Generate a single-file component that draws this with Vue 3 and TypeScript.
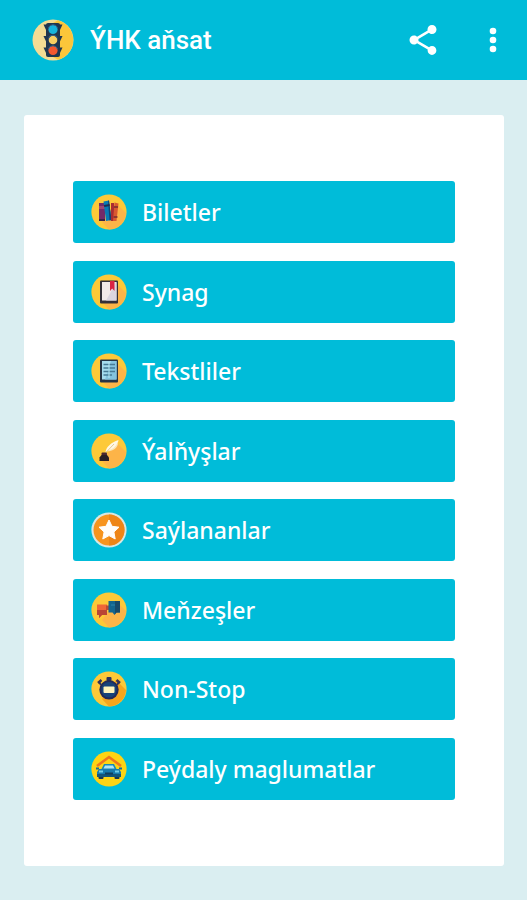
<script setup lang="ts">
type IconName = 'books' | 'notebook' | 'text' | 'quill' | 'star' | 'chat' | 'timer' | 'car'

interface MenuItem {
  icon: IconName
  label: string
}

const items: MenuItem[] = [
  { icon: 'books', label: 'Biletler' },
  { icon: 'notebook', label: 'Synag' },
  { icon: 'text', label: 'Tekstliler' },
  { icon: 'quill', label: 'Ýalňyşlar' },
  { icon: 'star', label: 'Saýlananlar' },
  { icon: 'chat', label: 'Meňzeşler' },
  { icon: 'timer', label: 'Non-Stop' },
  { icon: 'car', label: 'Peýdaly maglumatlar' },
]
</script>

<template>
  <div class="screen">
    <header class="bar">
      <svg class="logo" viewBox="0 0 42 42" aria-hidden="true">
        <circle cx="21" cy="21" r="20.5" fill="#f3dc94" />
        <path d="M26 1.200A20.500 20.500 0 0 1 26 40.800L21 38V4Z" fill="#fbc63a" />
        <g fill="#20364f">
          <path d="M11.500 5.500H30.500L27.500 12H14.500Z" />
          <path d="M11.500 17H30.500L27.500 23.500H14.500Z" />
          <path d="M11.500 28.500H30.500L27.500 35H14.500Z" />
          <rect x="14" y="4" width="14" height="34" rx="2" />
        </g>
        <circle cx="21" cy="10.500" r="4.600" fill="#16b4dc" />
        <circle cx="21" cy="21" r="4.300" fill="#f8cf62" />
        <circle cx="21" cy="31.500" r="4.600" fill="#f4582f" />
        <g fill="none" stroke="#35648a" stroke-width="1">
          <path d="M16.500 9a4.700 4.700 0 0 1 9 0M16.500 19.500a4.700 4.700 0 0 1 9 0M16.500 30a4.700 4.700 0 0 1 9 0" />
        </g>
      </svg>
      <h1 class="title">ÝHK aňsat</h1>
      <button class="action" type="button" aria-label="Paýlaş">
        <svg viewBox="0 0 24 24" aria-hidden="true">
          <path
            fill="#fff"
            d="M18 16.080c-.76 0-1.440.3-1.960.77L8.910 12.700c.05-.23.09-.46.09-.7s-.04-.47-.09-.7l7.050-4.110c.54.5 1.250.81 2.040.81 1.660 0 3-1.340 3-3s-1.340-3-3-3-3 1.340-3 3c0 .24.040.47.090.7L8.040 9.810C7.500 9.310 6.790 9 6 9c-1.660 0-3 1.340-3 3s1.340 3 3 3c.79 0 1.500-.31 2.040-.81l7.120 4.160c-.05.21-.08.43-.08.65 0 1.610 1.310 2.920 2.920 2.920s2.920-1.310 2.920-2.920-1.310-2.920-2.920-2.920z"
          />
        </svg>
      </button>
      <button class="action" type="button" aria-label="Menýu">
        <svg viewBox="0 0 24 24" aria-hidden="true">
          <g fill="#fff">
            <circle cx="12" cy="6" r="2.200" />
            <circle cx="12" cy="12" r="2.200" />
            <circle cx="12" cy="18" r="2.200" />
          </g>
        </svg>
      </button>
    </header>

    <main class="content">
      <nav class="panel">
        <button v-for="item in items" :key="item.icon" class="entry" type="button">
          <svg class="icon" viewBox="0 0 36 36" aria-hidden="true">
            <template v-if="item.icon !== 'star'">
              <circle cx="18" cy="18" r="17.600" :fill="item.icon === 'car' ? '#fdd414' : '#fdc938'" />
              <path
                v-if="item.icon !== 'car'"
                d="M25 9L35 19A17.600 17.600 0 0 1 18 35.600L11 28Z"
                :fill="item.icon === 'timer' ? '#f8a51c' : '#fdb448'"
              />
            </template>

            <template v-if="item.icon === 'books'">
              <rect x="8" y="9" width="6" height="18" fill="#742b68" />
              <path d="M8 12h6v3H8z" fill="#a34670" />
              <path d="M8 25h6v2H8z" fill="#392247" />
              <path d="M12.500 7.500L18 6.500L20.500 26L15 27Z" fill="#087bb4" />
              <path d="M17 6.700L18 6.500L20.500 26L18.500 26.500Z" fill="#144473" />
              <path d="M13 11L18.500 10L18.800 12L13.300 13Z" fill="#1c2c50" />
              <path d="M20 9H23V27H20Z" fill="#a92c32" />
              <path d="M23.500 8.500L27.500 9.500L25.500 27H22Z" fill="#d85830" />
              <path d="M23 13h4M22.500 23h4" stroke="#752b30" stroke-width="1.500" />
            </template>

            <template v-else-if="item.icon === 'notebook'">
              <rect x="9" y="6.500" width="18" height="23" rx="1" fill="#343039" />
              <rect x="11" y="8" width="14.500" height="18.500" fill="#f2e9e9" />
              <path d="M25.500 8V26.500H15Z" fill="#dcd5df" />
              <path d="M19 7H23.500V17L21.200 14.500L19 17Z" fill="#da2442" />
            </template>

            <template v-else-if="item.icon === 'text'">
              <rect x="9" y="6.500" width="18" height="23" rx="1" fill="#263444" />
              <rect x="11" y="8" width="14.500" height="18.500" fill="#a5dcef" />
              <path d="M20 8H25.500V26.500H14Z" fill="#84c4df" />
              <path d="M12.500 11.500H24M12.500 15H24M12.500 18.500H24M12.500 22H21" stroke="#477b96" stroke-width="1.300" />
              <path d="M18 9V25" stroke="#b6e8f4" stroke-width="1" />
            </template>

            <template v-else-if="item.icon === 'quill'">
              <path d="M14 20L27 10C27 15 22 18 15.500 18.500Z" fill="#fbe5b3" />
              <path d="M14.500 19.500C15 14 20 9.500 27.500 7C27 12 22 16.500 16 18Z" fill="#fff8e4" />
              <path d="M13 21.500L23 11" stroke="#e6c992" stroke-width="1" />
              <rect x="10.500" y="19.500" width="5.500" height="3" rx="1" fill="#4b2830" />
              <path d="M10.500 22H16L18 24.500V28H8.500V24.500Z" fill="#292026" />
            </template>

            <template v-else-if="item.icon === 'star'">
              <circle cx="18" cy="18" r="17.600" fill="#d8e7e2" />
              <circle cx="18" cy="18" r="15.500" fill="#f7941e" />
              <path d="M18 2.500A15.500 15.500 0 0 1 18 33.500Z" fill="#ee8517" />
              <path
                d="M18 8L21 14.300L28 15.200L22.900 20L24.200 27L18 23.600L11.800 27L13.100 20L8 15.200L15 14.300Z"
                fill="#fffdfb"
                stroke="#fffdfb"
                stroke-linejoin="round"
              />
            </template>

            <template v-else-if="item.icon === 'chat'">
              <path d="M6 12.500H16V23H11L8 26V23H6Z" fill="#ef6637" />
              <path d="M6 18H16V23H11L8 26V23H6Z" fill="#b94635" />
              <path d="M15 13.500H18V18H15Z" fill="#bd4932" />
              <path d="M17.500 9H29V20.500H25.500L23.500 23L21.500 20.500H17.500Z" fill="#14658e" />
              <path d="M24 9H29V20.500H25.500L24 22Z" fill="#194968" />
              <path d="M20 13H24" stroke="#2c85a9" stroke-width="1" />
            </template>

            <template v-else-if="item.icon === 'timer'">
              <path d="M7 12L10.500 9M29 12L25.500 9" stroke="#353155" stroke-width="2.500" />
              <path d="M10 14L8.500 11.500M26 14L27.500 11.500M18 9V7" stroke="#353155" stroke-width="2" />
              <rect x="15.500" y="6" width="5" height="4" rx="1" fill="#2d315c" />
              <circle cx="18" cy="18.800" r="9.700" fill="#242956" />
              <circle cx="18" cy="18.800" r="7.700" fill="#174279" />
              <rect x="12.500" y="15.500" width="11" height="6.500" rx="1" fill="#fff3bc" />
            </template>

            <template v-else>
              <path d="M6 15L18 6L30 15" fill="none" stroke="#ee751e" stroke-width="2.600" />
              <path d="M10.500 18L13 13H23L25.500 18Z" fill="#1888b7" />
              <path d="M12.500 17.500L14 14.500H22L23.500 17.500Z" fill="#b1e4f1" />
              <rect x="7.500" y="24" width="5" height="4" rx="1" fill="#173853" />
              <rect x="23.500" y="24" width="5" height="4" rx="1" fill="#173853" />
              <path d="M8 18H28L30 21V26H6V21Z" fill="#177bae" />
              <path d="M6 23H30V26H6Z" fill="#135579" />
              <path d="M8 20.500H12M24 20.500H28" stroke="#70cee9" stroke-width="2" />
              <path d="M14 22.500H22" stroke="#103e5c" stroke-width="2" />
              <path d="M5 17.500H8M28 17.500H31" stroke="#176b95" stroke-width="2" />
            </template>
          </svg>
          <span>{{ item.label }}</span>
        </button>
      </nav>
    </main>
  </div>
</template>

<style>
body {
  margin: 0;
  background: #daeef1;
}
</style>

<style scoped>
.screen {
  display: flex;
  flex-direction: column;
  min-height: 100vh;
  background: #daeef1;
}

.bar {
  display: flex;
  align-items: center;
  box-sizing: border-box;
  height: 80px;
  padding: 0 16px 0 32px;
  background: #00bcd9;
}

.logo {
  flex: none;
  width: 42px;
  height: 42px;
}

.title {
  flex: 1;
  margin: 0 0 0 16px;
  color: #fff;
  font: 500 26px/32px Roboto, sans-serif;
}

.action {
  flex: none;
  width: 36px;
  height: 36px;
  padding: 0;
  border: 0;
  background: none;
  cursor: pointer;
}

.action + .action {
  margin-left: 34px;
}

.action svg {
  display: block;
  width: 36px;
  height: 36px;
}

.content {
  display: flex;
  flex: 1;
  padding: 35px 23px 34px 24px;
}

.panel {
  display: flex;
  flex: 1;
  flex-direction: column;
  justify-content: space-between;
  gap: 16px;
  padding: 66px 49px;
  border-radius: 3px;
  background: #fff;
}

.entry {
  display: flex;
  align-items: center;
  gap: 15px;
  height: 62px;
  padding: 0 18px;
  border: 0;
  border-radius: 3px;
  background: #00bcd9;
  color: #fff;
  font: 500 23px/32px "Noto Sans", sans-serif;
  text-align: left;
  cursor: pointer;
}

.icon {
  flex: none;
  width: 36px;
  height: 36px;
}
</style>
